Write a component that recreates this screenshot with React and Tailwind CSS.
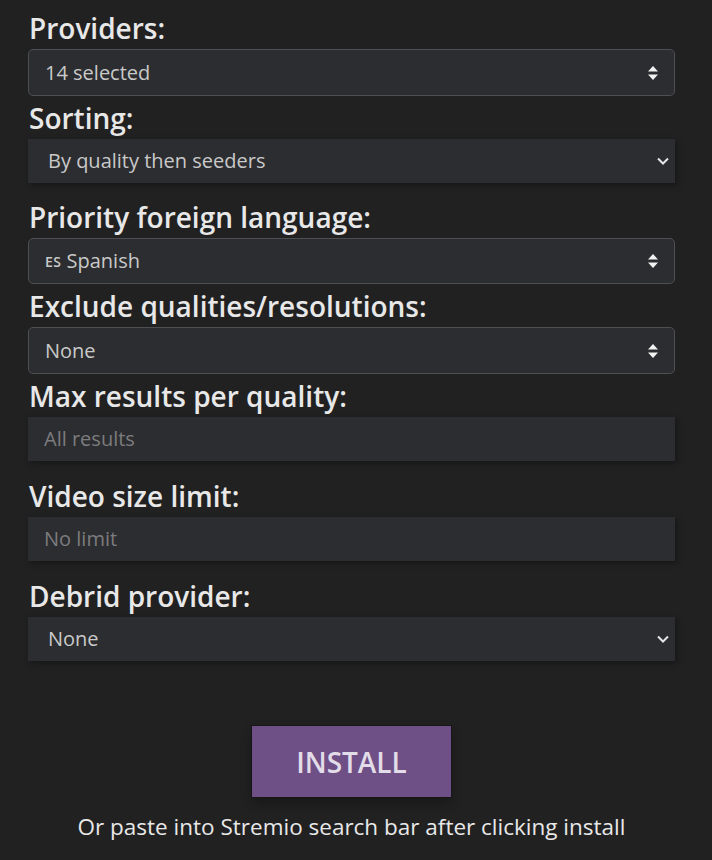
import React from 'react';

const font = { fontFamily: '"Open Sans", "Noto Sans", sans-serif' };

function UpDown() {
  return (
    <svg width="12" height="16" viewBox="0 0 12 16" className="shrink-0">
      <path d="M6 1 L11 6.5 H1 Z" fill="#f2f2f2" />
      <path d="M6 15 L11 9.5 H1 Z" fill="#f2f2f2" />
    </svg>
  );
}

function Chevron() {
  return (
    <svg width="14" height="10" viewBox="0 0 14 10" className="shrink-0">
      <path d="M2 2.5 L7 7.5 L12 2.5" fill="none" stroke="#e6e6e6" strokeWidth="2" />
    </svg>
  );
}

function Label({ children }) {
  return (
    <div className="text-[28px] leading-8 font-semibold text-[#e8e8e8] pl-px mb-[5px]">
      {children}
    </div>
  );
}

// bootstrap-select style boxes, with a border and the up/down caret
function MultiBox({ children, h, mb = 'mb-[6px]' }) {
  return (
    <div
      className={`${h} ${mb} flex items-center justify-between rounded-[5px] border border-[#4e4f52] bg-[#2c2d30] pl-4 pr-[15px] text-[20px] text-[#c9c9c9]`}
    >
      <span className="flex items-center gap-1">{children}</span>
      <UpDown />
    </div>
  );
}

function NativeSelect({ children, mb }) {
  return (
    <div
      className={`h-[44px] ${mb} flex items-center justify-between bg-[#2c2d30] shadow-[2px_2px_6px_rgba(0,0,0,0.35)] pl-5 pr-[5px] text-[20px] text-[#c9c9c9]`}
    >
      <span>{children}</span>
      <Chevron />
    </div>
  );
}

function TextInput({ placeholder, mb }) {
  return (
    <div
      className={`h-[44px] ${mb} flex items-center bg-[#2c2d30] shadow-[2px_2px_6px_rgba(0,0,0,0.35)] pl-4 text-[20px] text-[#7c7c7e]`}
    >
      {placeholder}
    </div>
  );
}

export default function App() {
  return (
    <div className="min-h-[860px] w-full bg-[#212121]" style={font}>
      <div className="mx-[28px] w-[647px] pt-[12px]">
        <Label>Providers:</Label>
        <MultiBox h="h-[47px]">14 selected</MultiBox>

        <Label>Sorting:</Label>
        <NativeSelect mb="mb-[18px]">By quality then seeders</NativeSelect>

        <Label>Priority foreign language:</Label>
        <MultiBox h="h-[46px]">
          <span className="text-[14px] font-semibold tracking-[0.5px] mr-px">ES</span>
          Spanish
        </MultiBox>

        <Label>Exclude qualities/resolutions:</Label>
        <MultiBox h="h-[47px]">None</MultiBox>

        <Label>Max results per quality:</Label>
        <TextInput placeholder="All results" mb="mb-[19px]" />

        <Label>Video size limit:</Label>
        <TextInput placeholder="No limit" mb="mb-[19px]" />

        <Label>Debrid provider:</Label>
        <NativeSelect mb="mb-0">None</NativeSelect>

        <div className="mt-[64px] flex justify-center">
          <button className="h-[73px] w-[201px] border border-[#161616] bg-[#6f5086] text-[28px] font-semibold text-[#e2dde8] shadow-[0_6px_10px_rgba(0,0,0,0.25)]">
            INSTALL
          </button>
        </div>
        <p className="mt-[13px] text-center text-[22.5px] leading-8 text-[#e8e8e8]">
          Or paste into Stremio search bar after clicking install
        </p>
      </div>
    </div>
  );
}
